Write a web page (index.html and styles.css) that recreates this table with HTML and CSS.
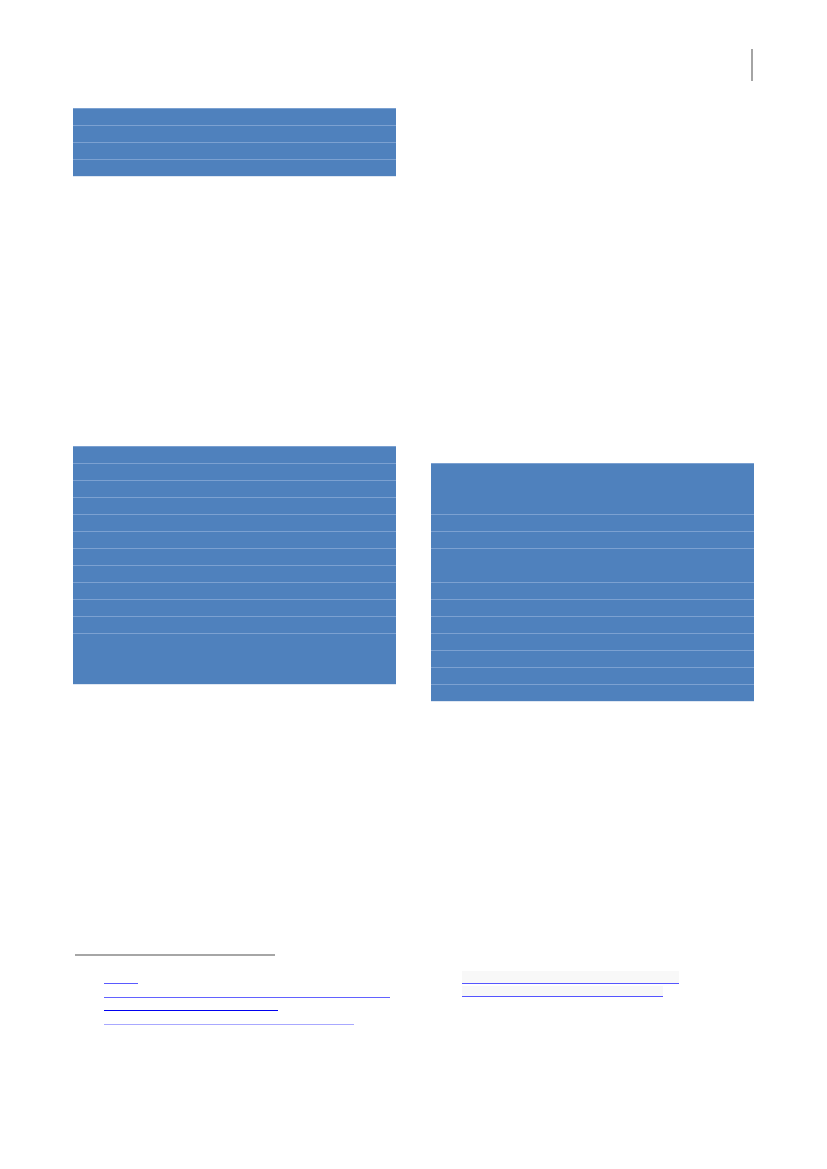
FILE: index.html
```html
<!DOCTYPE html>
<html lang="en">
<head>
<meta charset="utf-8">
<title>Page</title>
<link rel="stylesheet" href="styles.css">
</head>
<body>
<div class="page">
  <header class="head">
    <span class="page-rule"></span>
  </header>

  <main class="columns">
    <section class="col">
      <div class="tbl tbl-a">
        <div class="row"></div>
        <div class="row"></div>
        <div class="row"></div>
        <div class="row"></div>
      </div>
      <div class="tbl tbl-b">
        <div class="row"></div>
        <div class="row"></div>
        <div class="row"></div>
        <div class="row"></div>
        <div class="row"></div>
        <div class="row"></div>
        <div class="row"></div>
        <div class="row"></div>
        <div class="row"></div>
        <div class="row"></div>
        <div class="row"></div>
        <div class="row tall"></div>
      </div>
    </section>
    <section class="col">
      <div class="tbl tbl-c">
        <div class="row tall"></div>
        <div class="row"></div>
        <div class="row"></div>
        <div class="row double"></div>
        <div class="row"></div>
        <div class="row"></div>
        <div class="row"></div>
        <div class="row"></div>
        <div class="row"></div>
        <div class="row"></div>
        <div class="row"></div>
      </div>
    </section>
  </main>

  <footer class="notes">
    <div class="note-sep"></div>
    <div class="note-cols">
      <div class="note-list">
        <a class="note n1" href="#"></a>
        <a class="note n2" href="#"></a>
        <a class="note n3" href="#"></a>
        <a class="note n4" href="#"></a>
      </div>
      <div class="note-list">
        <a class="note shaded r1" href="#"></a>
        <a class="note shaded r2" href="#"></a>
      </div>
    </div>
  </footer>
</div>
</body>
</html>
```
FILE: styles.css
```css
* { box-sizing: border-box; }

html, body {
  margin: 0;
  padding: 0;
  background: #ffffff;
  font-family: "Liberation Sans", Arial, sans-serif;
}

.page {
  width: 827px;
  min-height: 1169px;
  padding: 49px 73px 0 73px;
}

.head {
  display: flex;
  justify-content: flex-end;
  height: 32px;
  padding-right: 1px;
}

.page-rule {
  display: block;
  width: 2px;
  height: 32px;
  background: #a4a4a4;
}

.columns {
  display: grid;
  grid-template-columns: 323px 323px;
  column-gap: 35px;
  margin-top: 27px;
  align-items: start;
}

.col {
  display: flex;
  flex-direction: column;
}

.tbl {
  display: flex;
  flex-direction: column;
  background: #4f81bd;
  border-bottom: 1px solid #dfe7f2;
}

.row {
  height: 17px;
  border-top: 1px solid #7ca1d1;
  background: #4f81bd;
}

.row.tall { height: 51px; }
.row.double { height: 34px; }

.tbl-b { margin-top: 269px; }
.tbl-c { margin-top: 355px; }

.notes {
  margin-top: 252px;
}

.note-sep {
  width: 200px;
  height: 2px;
  margin-left: 2px;
  background: #a6a6a6;
}

.note-cols {
  display: grid;
  grid-template-columns: 323px 323px;
  column-gap: 35px;
  margin-top: 15px;
}

.note-list {
  display: flex;
  flex-direction: column;
  align-items: flex-start;
  padding-left: 31px;
}

.note {
  display: block;
  height: 13px;
  border-bottom: 1px solid #5a5aff;
  margin-bottom: 0.67px;
}

.n1 { width: 34px; border-bottom-color: #5a5aff; }
.n2 { width: 286px; border-bottom-color: #6262ff; }
.n3 { width: 174px; border-bottom-color: #0000f0; }
.n4 { width: 250px; border-bottom-color: #a8a8ff; }

.shaded {
  background: #f8f8f8;
  border-bottom-color: #5555ff;
}

.r1 { width: 217px; height: 13px; margin-bottom: 2px; }
.r2 { width: 201px; height: 11px; }
```
